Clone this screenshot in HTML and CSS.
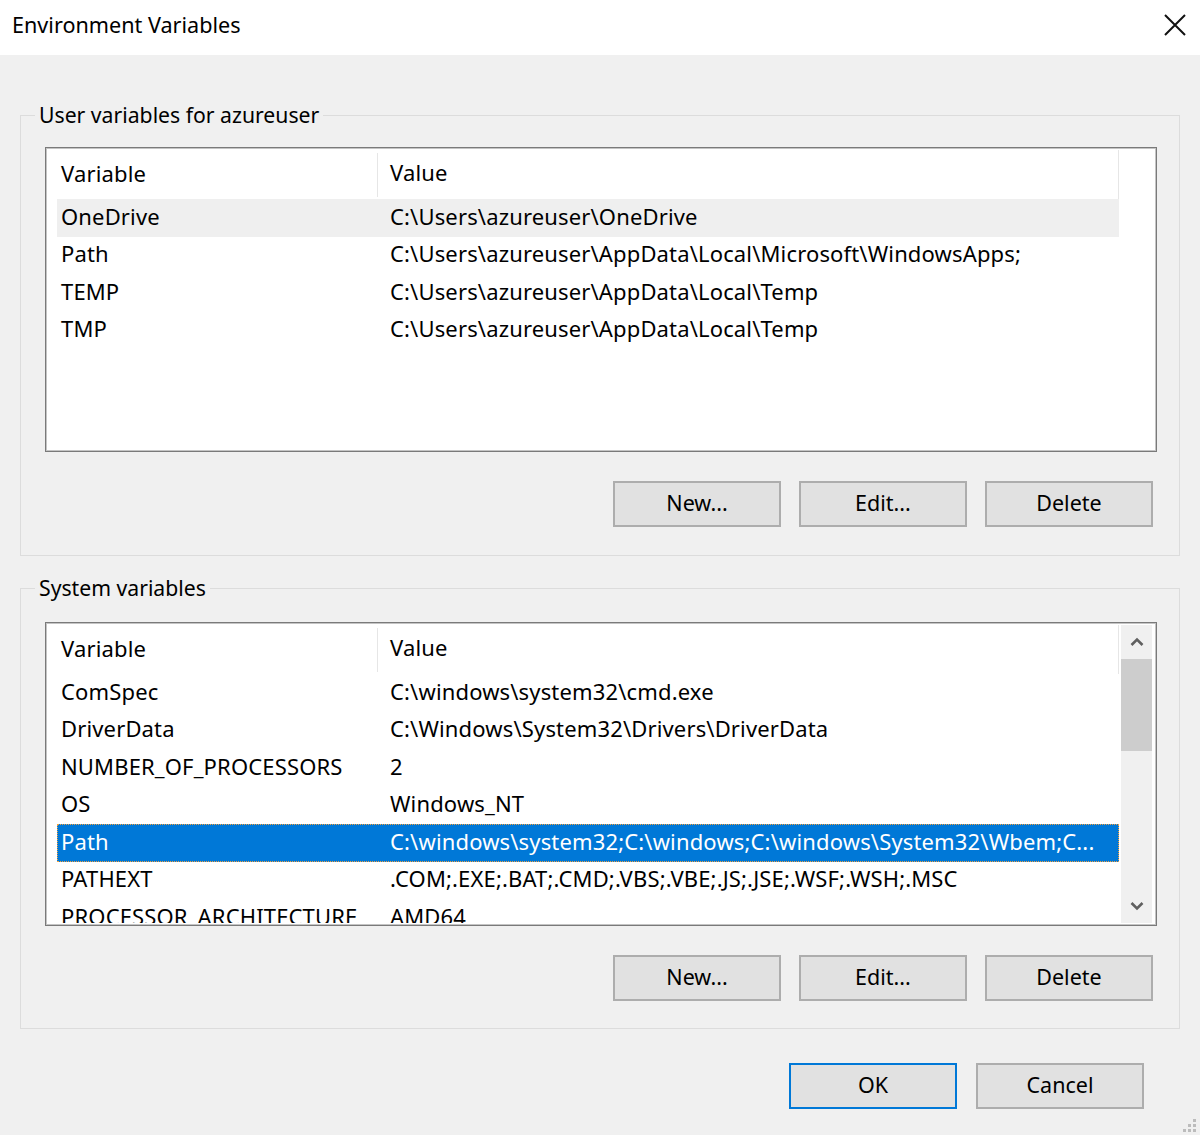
FILE: index.html
```html
<!DOCTYPE html>
<html>
<head>
<meta charset="utf-8">
<link rel="stylesheet" href="styles.css">
</head>
<body>
<div class="dialog">
  <div class="titlebar">
    <span class="title">Environment Variables</span>
    <svg class="close" width="24" height="24" viewBox="0 0 24 24"><path d="M2 2 L22 22 M22 2 L2 22" stroke="#111" stroke-width="2" fill="none"/></svg>
  </div>
  <div class="content">
    <fieldset class="group">
      <legend>User variables for azureuser</legend>
      <div class="listbox">
        <div class="rows">
          <div class="row header"><div class="c1">Variable</div><div class="c2">Value</div></div>
          <div class="row hover"><div class="c1">OneDrive</div><div class="c2">C:\Users\azureuser\OneDrive</div></div>
          <div class="row"><div class="c1">Path</div><div class="c2">C:\Users\azureuser\AppData\Local\Microsoft\WindowsApps;</div></div>
          <div class="row"><div class="c1">TEMP</div><div class="c2">C:\Users\azureuser\AppData\Local\Temp</div></div>
          <div class="row"><div class="c1">TMP</div><div class="c2">C:\Users\azureuser\AppData\Local\Temp</div></div>
        </div>
      </div>
      <div class="buttons">
        <button class="btn">New...</button>
        <button class="btn">Edit...</button>
        <button class="btn">Delete</button>
      </div>
    </fieldset>
    <fieldset class="group group2">
      <legend>System variables</legend>
      <div class="listbox">
        <div class="rows">
          <div class="row header"><div class="c1">Variable</div><div class="c2">Value</div></div>
          <div class="row"><div class="c1">ComSpec</div><div class="c2">C:\windows\system32\cmd.exe</div></div>
          <div class="row"><div class="c1">DriverData</div><div class="c2">C:\Windows\System32\Drivers\DriverData</div></div>
          <div class="row"><div class="c1">NUMBER_OF_PROCESSORS</div><div class="c2">2</div></div>
          <div class="row"><div class="c1">OS</div><div class="c2">Windows_NT</div></div>
          <div class="row selected"><div class="c1">Path</div><div class="c2">C:\windows\system32;C:\windows;C:\windows\System32\Wbem;C...</div></div>
          <div class="row"><div class="c1">PATHEXT</div><div class="c2">.COM;.EXE;.BAT;.CMD;.VBS;.VBE;.JS;.JSE;.WSF;.WSH;.MSC</div></div>
          <div class="row"><div class="c1">PROCESSOR_ARCHITECTURE</div><div class="c2">AMD64</div></div>
        </div>
        <div class="scrollbar">
          <div class="arrow"><svg width="14" height="10" viewBox="0 0 14 10"><path d="M1.5 8 L7 2.5 L12.5 8" stroke="#606060" stroke-width="2.6" fill="none"/></svg></div>
          <div class="track"><div class="thumb"></div></div>
          <div class="arrow"><svg width="14" height="10" viewBox="0 0 14 10"><path d="M1.5 2 L7 7.5 L12.5 2" stroke="#606060" stroke-width="2.6" fill="none"/></svg></div>
        </div>
      </div>
      <div class="buttons">
        <button class="btn">New...</button>
        <button class="btn">Edit...</button>
        <button class="btn">Delete</button>
      </div>
    </fieldset>
    <div class="footer">
      <button class="btn default">OK</button>
      <button class="btn">Cancel</button>
    </div>
    <div class="grip">
      <span></span><span></span><span></span><span></span><span></span><span></span>
    </div>
  </div>
</div>
</body>
</html>
```
FILE: styles.css
```css
html, body {
  margin: 0;
  padding: 0;
  background: #f0f0f0;
}
body {
  font-family: "Noto Sans", "Open Sans", sans-serif;
  font-size: 21px;
  color: #000;
}
.dialog {
  width: 1200px;
  height: 1135px;
  overflow: hidden;
  position: relative;
}
.titlebar {
  height: 55px;
  background: #fff;
  display: flex;
  align-items: center;
  justify-content: space-between;
  padding: 0 13px 0 12px;
  box-sizing: border-box;
}
.title {
  font-size: 21.6px;
  margin-top: -6px;
}
.close {
  margin-top: -6px;
}
.content {
  padding: 45px 20px 0 20px;
}
.group {
  margin: 0;
  padding: 17px 0 0 0;
  border: 1px solid #dcdcdc;
  min-width: 0;
}
.group2 {
  margin-top: 17px;
  padding-top: 19px;
}
.group legend {
  margin-left: 14px;
  padding: 0 4px;
  line-height: 30px;
  font-size: 21.2px;
}
.listbox {
  margin-left: 24px;
  width: 1112px;
  height: 305px;
  box-sizing: border-box;
  border: 1px solid #7a7a7a;
  box-shadow: inset 0 0 0 1px #c4c4c4;
  background: #fff;
  display: flex;
  padding: 2px 2px 2px 11px;
  overflow: hidden;
  font-size: 22px;
  letter-spacing: 0.15px;
}
.group2 .listbox {
  height: 304px;
}
.rows {
  width: 1062px;
  flex: none;
  overflow: hidden;
}
.row {
  display: flex;
  height: 37.5px;
  align-items: center;
  white-space: nowrap;
}
.row .c1, .row .c2 {
  padding-bottom: 4px;
}
.row.header {
  height: 49px;
  border-right: 1px solid #e6e6e6;
  box-sizing: border-box;
  padding-bottom: 2px;
}
.row.header .c1 {
  border-right: 1px solid #e6e6e6;
  align-self: stretch;
  display: flex;
  align-items: center;
  margin: 3px 0 0 0;
}
.c1 {
  width: 321px;
  box-sizing: border-box;
  padding-left: 4px;
  flex: none;
}
.c2 {
  padding-left: 12px;
}
.row.hover {
  background: #efefef;
}
.row.selected {
  background: #0078d7;
  color: #fff;
  outline: 1px dotted #f0a040;
  outline-offset: -1px;
}
.scrollbar {
  margin-left: 2px;
  width: 31px;
  flex: none;
  background: #f0f0f0;
  display: flex;
  flex-direction: column;
}
.arrow {
  height: 34px;
  display: flex;
  align-items: center;
  justify-content: center;
  flex: none;
}
.track {
  flex: 1;
}
.thumb {
  height: 92px;
  background: #cdcdcd;
}
.buttons {
  display: flex;
  justify-content: flex-end;
  gap: 18px;
  padding: 29px 26px 28px 0;
}
.group2 .buttons {
  padding-bottom: 27px;
}
.btn {
  width: 168px;
  height: 46px;
  box-sizing: border-box;
  background: #e1e1e1;
  border: 2px solid #adadad;
  font-family: inherit;
  font-size: 21.5px;
  color: #000;
  padding: 0 0 3px 0;
  margin: 0;
}
.btn.default {
  border-color: #0078d7;
}
.footer {
  display: flex;
  justify-content: flex-end;
  gap: 19px;
  padding: 34px 36px 0 0;
}
.grip {
  position: absolute;
  right: 4px;
  bottom: 2px;
  width: 14px;
  height: 14px;
}
.grip span {
  position: absolute;
  width: 3px;
  height: 3px;
  background: #bcbcbc;
}
.grip span:nth-child(1) { right: 0; top: 0; }
.grip span:nth-child(2) { right: 0; top: 5px; }
.grip span:nth-child(3) { right: 5px; top: 5px; }
.grip span:nth-child(4) { right: 0; top: 10px; }
.grip span:nth-child(5) { right: 5px; top: 10px; }
.grip span:nth-child(6) { right: 10px; top: 10px; }
```
